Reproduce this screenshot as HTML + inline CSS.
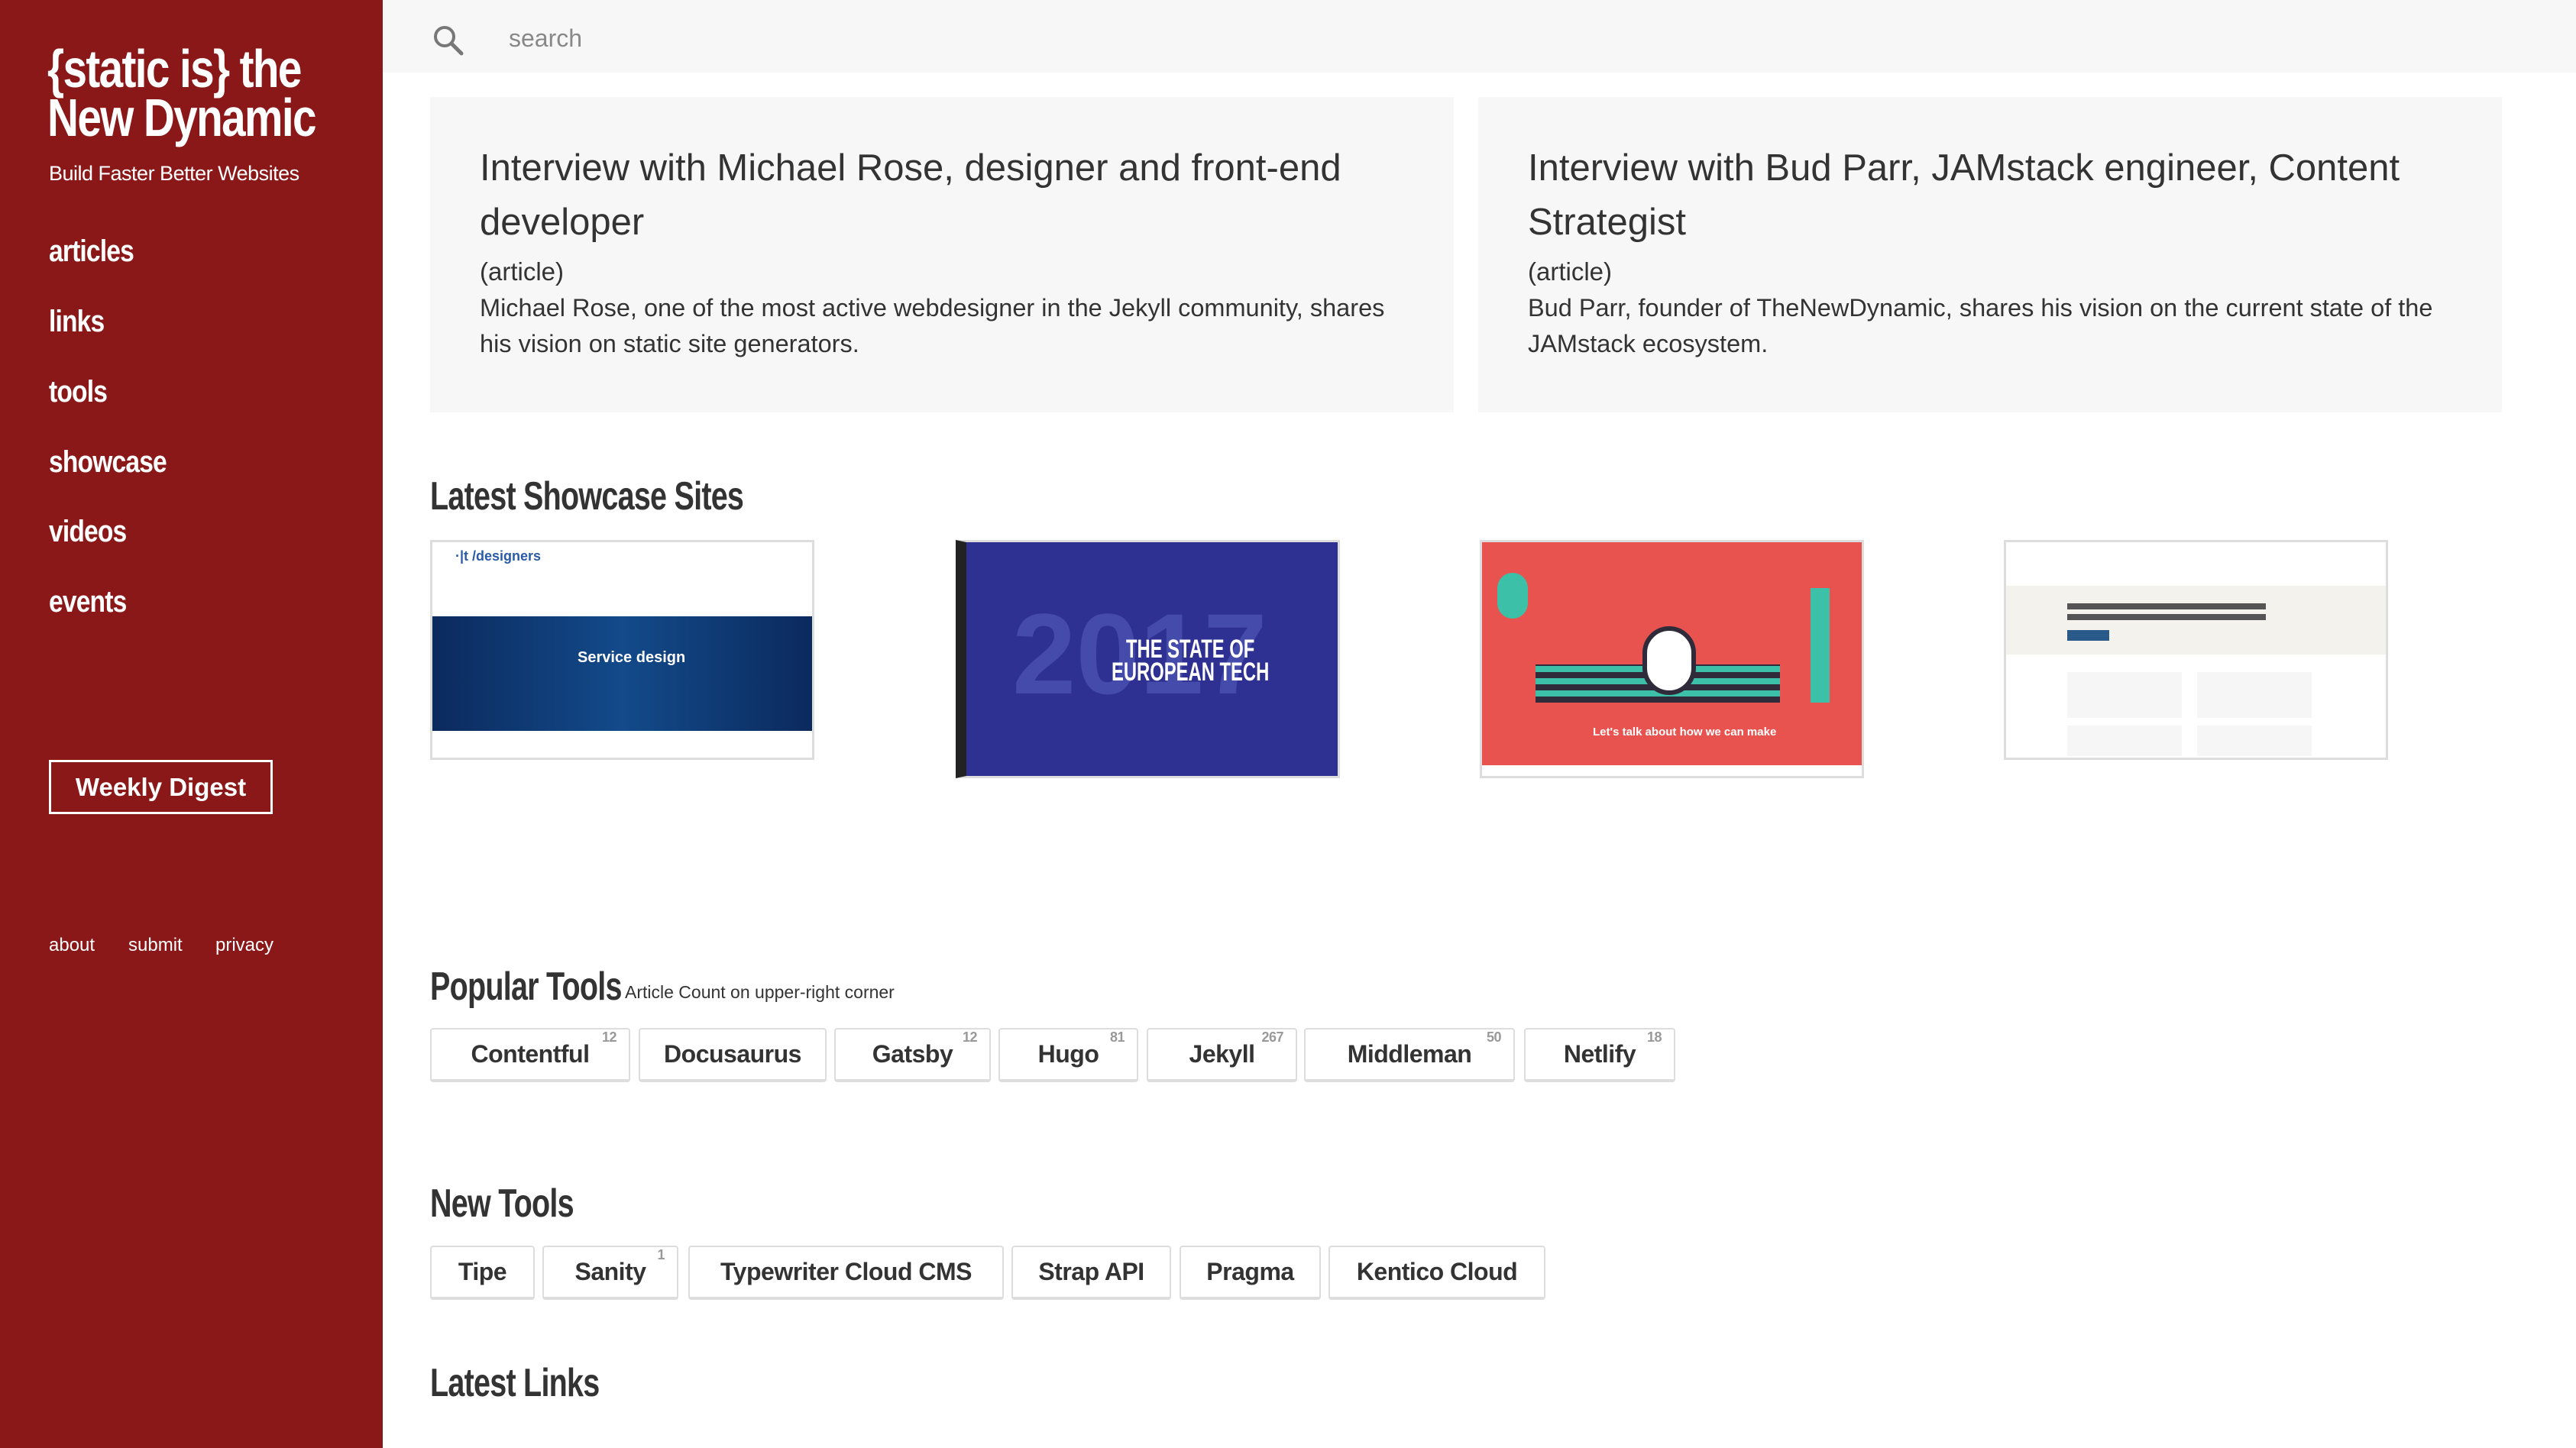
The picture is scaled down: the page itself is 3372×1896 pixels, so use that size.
<!DOCTYPE html>
<html><head><meta charset="utf-8"><style>
*{margin:0;padding:0;box-sizing:border-box}
body{width:3372px;height:1896px;position:relative;overflow:hidden;background:#fff;font-family:"Liberation Sans",sans-serif;color:#333}
.a{position:absolute;white-space:nowrap}
#side{position:absolute;left:0;top:0;width:501px;height:1896px;background:#8b1819;color:#fff}
.cond{font-family:"Liberation Sans",sans-serif;font-weight:bold;transform-origin:0 0}
.nav{left:64px;font-size:40px;letter-spacing:-1px;color:#fff;transform:scaleX(.84)}
.card{position:absolute;top:127px;height:413px;width:1340px;background:#f7f7f7}
.card .t{position:absolute;left:65px;top:58px;font-size:49px;line-height:71px;color:#333;white-space:nowrap}
.card .k{position:absolute;left:65px;top:210px;font-size:33px;color:#333}
.card .d{position:absolute;left:65px;top:253px;font-size:32.5px;line-height:47px;color:#333;white-space:nowrap}
.h{left:563px;font-size:52px;letter-spacing:-1px;color:#333;transform:scaleX(.76)}
.btn{position:absolute;height:71px;border:2px solid #ddd;border-bottom-width:4px;border-radius:4px;font-weight:bold;font-size:32px;line-height:64px;text-align:center;color:#333;letter-spacing:-0.5px}
.btn sup{position:absolute;right:16px;top:-22px;font-size:18px;color:#999;font-weight:bold}
.th{position:absolute;top:707px;width:503px;border:3px solid #ddd;overflow:hidden}
</style></head><body>
<div id="side">
  <div class="a cond" style="left:62px;top:58px;font-size:70px;line-height:64px;letter-spacing:-2px;transform:scaleX(.81)">{static is} the<br>New Dynamic</div>
  <div class="a" style="left:64px;top:212px;font-size:27px;letter-spacing:-0.5px">Build Faster Better Websites</div>
  <div class="a cond nav" style="top:307px">articles</div>
  <div class="a cond nav" style="top:399px">links</div>
  <div class="a cond nav" style="top:491px">tools</div>
  <div class="a cond nav" style="top:583px">showcase</div>
  <div class="a cond nav" style="top:674px">videos</div>
  <div class="a cond nav" style="top:766px">events</div>
  <div class="a" style="left:64px;top:995px;width:293px;height:71px;border:3px solid #fff;font-weight:bold;font-size:33px;line-height:65px;text-align:center">Weekly Digest</div>
  <div class="a" style="left:64px;top:1224px;font-size:24px">about</div>
  <div class="a" style="left:168px;top:1224px;font-size:24px">submit</div>
  <div class="a" style="left:282px;top:1224px;font-size:24px">privacy</div>
</div>
<div class="a" style="left:501px;top:0;width:2871px;height:95px;background:#f7f7f7"></div>
<svg class="a" style="left:566px;top:32px" width="42" height="42" viewBox="0 0 42 42"><circle cx="16" cy="16" r="12" fill="none" stroke="#777" stroke-width="4"/><line x1="25" y1="25" x2="38" y2="38" stroke="#777" stroke-width="5" stroke-linecap="round"/></svg>
<div class="a" style="left:666px;top:32px;font-size:32px;color:#888">search</div>

<div class="card" style="left:563px">
  <div class="t">Interview with Michael Rose, designer and front-end<br>developer</div>
  <div class="k">(article)</div>
  <div class="d">Michael Rose, one of the most active webdesigner in the Jekyll community, shares<br>his vision on static site generators.</div>
</div>
<div class="card" style="left:1935px">
  <div class="t">Interview with Bud Parr, JAMstack engineer, Content<br>Strategist</div>
  <div class="k">(article)</div>
  <div class="d">Bud Parr, founder of TheNewDynamic, shares his vision on the current state of the<br>JAMstack ecosystem.</div>
</div>

<div class="a cond h" style="top:620px">Latest Showcase Sites</div>

<div class="th" style="left:563px;height:288px;background:#fff">
  <div class="a" style="left:30px;top:8px;font-size:18px;color:#2a5aa8;font-weight:bold">·|t /designers</div>
  <div class="a" style="left:0;top:97px;width:100%;height:150px;background:linear-gradient(90deg,#0b2a5e,#134a8a 50%,#0b2a5e)"></div>
  <div class="a" style="left:190px;top:140px;font-size:20px;color:#fff;font-weight:bold">Service design</div>
</div>
<div class="th" style="left:1251px;height:312px;background:#2e3192;border-left:14px solid #222">
  <div class="a cond" style="left:60px;top:60px;font-size:150px;color:#4a52b0;opacity:.8">2017</div>
  <div class="a cond" style="left:190px;top:125px;font-size:34px;line-height:30px;color:#fff;text-align:center;transform:scaleX(.7)">THE STATE OF<br>EUROPEAN TECH</div>
</div>
<div class="th" style="left:1937px;height:312px;background:#e8534f">
  <div class="a" style="left:0;top:292px;width:100%;height:30px;background:#fff"></div>
  <div class="a" style="left:70px;top:160px;width:320px;height:50px;background:repeating-linear-gradient(0deg,#2f2b3a 0 8px,#3cc0a8 8px 16px)"></div>
  <div class="a" style="left:210px;top:110px;width:70px;height:90px;border-radius:35px;background:#fff;border:6px solid #2f2b3a"></div>
  <div class="a" style="left:430px;top:60px;width:25px;height:150px;background:#3cc0a8"></div>
  <div class="a" style="left:20px;top:40px;width:40px;height:60px;border-radius:20px;background:#3cc0a8"></div>
  <div class="a" style="left:145px;top:240px;font-size:15px;color:#fff;font-weight:bold">Let's talk about how we can make</div>
</div>
<div class="th" style="left:2623px;height:288px;background:#fff">
  <div class="a" style="left:0;top:57px;width:100%;height:90px;background:#f4f2ec"></div>
  <div class="a" style="left:80px;top:80px;width:260px;height:8px;background:#555"></div>
  <div class="a" style="left:80px;top:94px;width:260px;height:8px;background:#555"></div>
  <div class="a" style="left:80px;top:115px;width:55px;height:14px;background:#2a5a8a"></div>
  <div class="a" style="left:80px;top:170px;width:320px;height:60px;background:repeating-linear-gradient(90deg,#f6f6f6 0 150px,#fff 150px 170px)"></div>
  <div class="a" style="left:80px;top:240px;width:320px;height:40px;background:repeating-linear-gradient(90deg,#f6f6f6 0 150px,#fff 150px 170px)"></div>
</div>

<div class="a cond h" style="top:1262px">Popular Tools</div>
<div class="a" style="left:818px;top:1286px;font-size:23px;color:#333">Article Count on upper-right corner</div>
<div class="btn" style="left:563px;top:1346px;width:262px">Contentful<sup>12</sup></div>
<div class="btn" style="left:836px;top:1346px;width:246px">Docusaurus</div>
<div class="btn" style="left:1092px;top:1346px;width:205px">Gatsby<sup>12</sup></div>
<div class="btn" style="left:1307px;top:1346px;width:183px">Hugo<sup>81</sup></div>
<div class="btn" style="left:1501px;top:1346px;width:197px">Jekyll<sup>267</sup></div>
<div class="btn" style="left:1707px;top:1346px;width:276px">Middleman<sup>50</sup></div>
<div class="btn" style="left:1995px;top:1346px;width:198px">Netlify<sup>18</sup></div>

<div class="a cond h" style="top:1546px">New Tools</div>
<div class="btn" style="left:563px;top:1631px;width:137px">Tipe</div>
<div class="btn" style="left:710px;top:1631px;width:178px">Sanity<sup>1</sup></div>
<div class="btn" style="left:901px;top:1631px;width:413px">Typewriter Cloud CMS</div>
<div class="btn" style="left:1324px;top:1631px;width:209px">Strap API</div>
<div class="btn" style="left:1544px;top:1631px;width:185px">Pragma</div>
<div class="btn" style="left:1739px;top:1631px;width:284px">Kentico Cloud</div>

<div class="a cond h" style="top:1781px">Latest Links</div>
</body></html>
